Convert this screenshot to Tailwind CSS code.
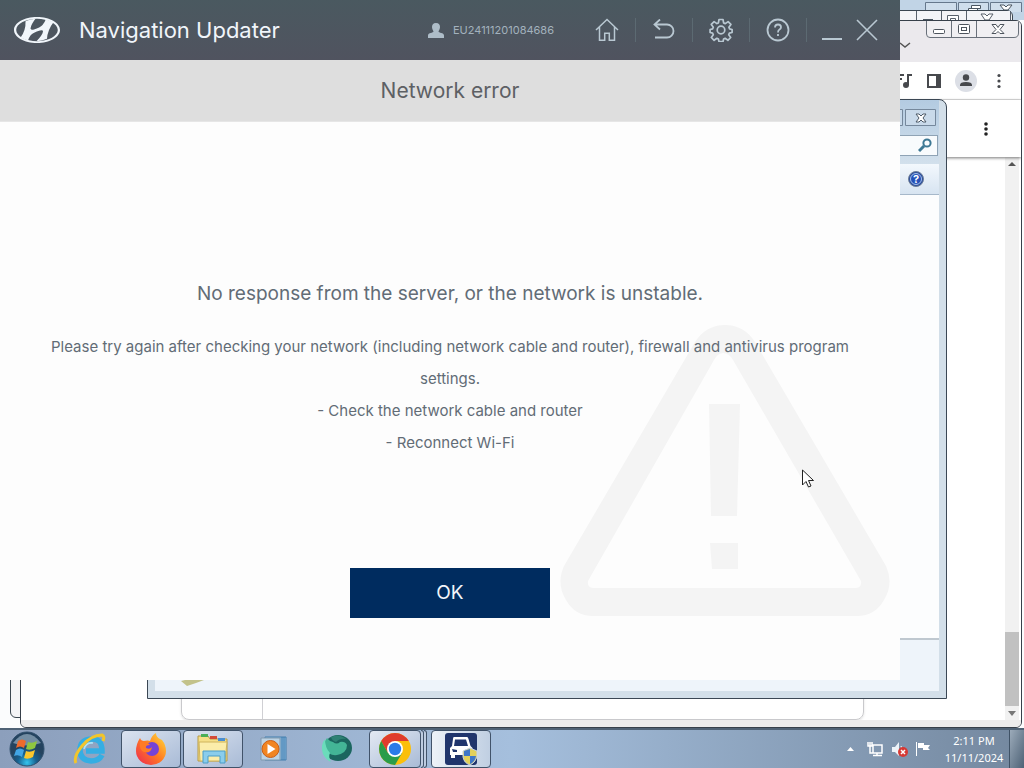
<!DOCTYPE html>
<html lang="en">
<head>
<meta charset="utf-8">
<title>Navigation Updater</title>
<script src="https://cdn.jsdelivr.net/npm/@tailwindcss/browser@4"></script>
</head>
<body class="flex h-screen flex-col overflow-hidden bg-[#b9cde0] font-['Inter','Liberation_Sans',sans-serif]">

<!-- Desktop with its stacked windows -->
<div class="relative min-h-0 flex-1 overflow-hidden">

  <!-- Rearmost window -->
  <div class="absolute inset-0 bg-[#fbfcfd]">
    <div class="h-5 bg-[#c1d4e6]"></div>
    <svg class="absolute top-0 right-0" width="104" height="12" viewBox="0 0 104 12" fill="#cfdeec" stroke="#66788c">
      <path d="M5.500 2.500H36.500V14H5.500zM38.500 2.500H68.500V14H38.500zM70.500 2.500H101.500V14H70.500z"/>
      <path d="M51.500 5.500h9v3h-9zM48.500 8.500h9v4h-9z" fill="#fff" stroke="#4b5661"/>
      <path d="M80 5h4l2 2 2-2h4l-4 5h-4z" fill="#fff" stroke="#4b5661"/>
    </svg>
  </div>

  <!-- Second window -->
  <div class="absolute top-[10px] right-[11px] bottom-[10px] left-[10px] rounded-md border border-[#3b4650] bg-[#f4f4f6]">
    <svg class="absolute top-0 right-0" width="100" height="12" viewBox="0 0 100 12" fill="#f3f4f7" stroke="#59616b">
      <path d="M4.500 -1V14H29.500V-1M54.500 -1V14H98.500V-1"/>
      <path d="M11 8.500h10" stroke="#4b5661"/>
      <path d="M35.500 4.500h11v8h-11zM38.500 7.500h5v3h-5z" fill="#fff"/>
      <path d="M69 3h4l2 2 2-2h4l-4 6h-4z" fill="#fff"/>
    </svg>
  </div>

  <!-- Browser window -->
  <section class="absolute top-[20px] right-[2px] bottom-0 left-[20px] isolate flex flex-col overflow-hidden rounded-md border border-[#37404a] bg-[#ebebed]">
    <div class="flex h-[41px] shrink-0 items-start justify-end bg-[#ebe9ed] pr-[2px]">
      <svg class="mt-[20px] mr-[15px]" width="12" height="9" fill="none" stroke="#555" stroke-width="1.500"><path d="M1 2l5 4 5-4"/></svg>
      <svg width="93" height="18" viewBox="0 0 93 18" fill="#f0eff2" stroke="#69707a">
        <path d="M.5 0V13Q.5 16.500 4 16.500H88Q92.500 16.500 92.500 12V0M25.500 0V16.500M50.500 0V16.500"/>
        <rect x="7.500" y="8.500" width="11" height="4" rx="1" fill="#fff" stroke="#4d545d"/>
        <rect x="32.500" y="3.500" width="11" height="9" rx="1" fill="#fff" stroke="#4d545d"/>
        <rect x="35.500" y="6.500" width="5" height="3" fill="#fff" stroke="#4d545d"/>
        <path d="M66 3.500h4l2 3 2-3h4l-4 5 4 4h-4l-2-2-2 2h-4l4-4z" fill="#fff" stroke="#4d545d"/>
      </svg>
    </div>
    <div class="flex h-[38px] shrink-0 items-center justify-end gap-[13px] border-b border-[#dcdcdc] bg-white pr-[17px] text-[#47494d]">
      <svg width="20" height="20" fill="none" stroke="currentColor" stroke-width="2"><path d="M2 4h9M2 8h7M15 14V4h4"/><circle cx="13" cy="14" r="2" fill="currentColor"/></svg>
      <svg width="16" height="16" fill="none" stroke="currentColor" stroke-width="2"><path d="M2 2h12v12H2z"/><path d="M10 1h5v14h-5z" fill="currentColor" stroke="none"/></svg>
      <svg class="mr-1" width="22" height="22" viewBox="0 0 22 22"><circle cx="11" cy="11" r="11" fill="#dcdfe6"/><circle cx="11" cy="7.500" r="3.200" fill="currentColor"/><path d="M5 16v-1q0-3 6-3t6 3v1z" fill="currentColor"/></svg>
      <svg width="10" height="16" fill="currentColor"><circle cx="5" cy="2.500" r="1.600"/><circle cx="5" cy="8" r="1.600"/><circle cx="5" cy="13.500" r="1.600"/></svg>
    </div>
    <div class="z-10 flex h-[57px] shrink-0 items-center justify-end bg-white pr-[31px] shadow-[0_1px_3px_#777]">
      <svg width="8" height="16" fill="#222"><circle cx="4" cy="3" r="1.800"/><circle cx="4" cy="8" r="1.800"/><circle cx="4" cy="13" r="1.800"/></svg>
    </div>
    <div class="flex min-h-0 flex-1 bg-white">
      <div class="flex flex-1 items-end">
        <div class="mr-[141px] ml-[160px] h-24 flex-1 rounded-lg border border-[#c9c9cc] pl-[80px] shadow-sm"><div class="h-full border-l border-[#d0d0d4]"></div></div>
      </div>
      <div class="mr-[2px] flex w-[14px] flex-col items-center justify-between bg-[#f1f1f1] py-1">
        <svg width="8" height="6" fill="#555"><path d="M0 5l4-4 4 4z"/></svg>
        <div class="mt-auto mb-[5px] h-[74px] w-full bg-[#c1c1c1]"></div>
        <svg width="8" height="5" fill="#777"><path d="M0 0h8L4 5z"/></svg>
      </div>
    </div>
    <div class="h-[7px] shrink-0 bg-[#ececec]"></div>
  </section>

  <!-- File explorer window -->
  <section class="absolute top-[99px] right-[77px] bottom-[29px] left-[147px] flex flex-col rounded-tr-lg border border-[#3b4754] bg-[#d3dfe9] px-[7px] pb-[7px]">
    <div class="flex h-[64px] shrink-0 flex-col items-end bg-linear-to-b from-[#b3cbe1] to-[#d2e0ec]">
      <svg class="mt-[9px] shrink-0" width="70" height="17" viewBox="0 0 70 17" fill="#c9daea" stroke="#75889c">
        <path d="M.5.5h33v16H.5zM36.500.5h30v16h-30z"/>
        <path d="M47 5h3l2 2 2-2h3l-3 4 3 4h-3l-2-2-2 2h-3l3-4z" fill="#fff" stroke="#4d5a68"/>
      </svg>
      <div class="mt-[9px] mr-px flex h-[21px] w-48 items-center justify-end border border-[#8fa3b5] bg-[#f8fbfd] pr-1">
        <svg width="15" height="15" fill="none" stroke="#3d7894" stroke-width="2"><circle cx="9" cy="5" r="3.600"/><path d="M6 8l-5 5" stroke-width="3"/></svg>
      </div>
    </div>
    <div class="flex h-[31px] shrink-0 items-center justify-end border-b border-[#a6b8ca] bg-linear-to-b from-[#f3f8fd] to-[#d7e4f1] pr-[15px]">
      <svg width="16" height="16" viewBox="0 0 16 16"><circle cx="8" cy="8" r="7.500" fill="#2c4f9e" stroke="#6f7f98"/><circle cx="8" cy="8" r="5.500" fill="#2450b8" stroke="#a5c0e8"/><text x="8" y="12" font-size="11" font-weight="700" fill="#fff" text-anchor="middle">?</text></svg>
    </div>
    <div class="min-h-0 flex-1 border-b-2 border-[#bfc8d0] bg-[#fcfdfe]"></div>
    <div class="flex h-[51px] shrink-0 items-end bg-[#eef4fa] pb-[5px] pl-[24px]">
      <svg width="28" height="8"><path d="M2 3l12-3 11 2-8 3-9 3z" fill="#c2c28a"/></svg>
    </div>
  </section>

  <!-- Navigation Updater window -->
  <main class="absolute top-0 right-[124px] bottom-[48px] left-0 flex flex-col bg-[#fdfdfd] text-[#626c76]">
    <header class="flex h-[60px] shrink-0 items-center bg-linear-to-b from-[#4a5960] to-[#50535f] pr-[16px] pl-[14px]">
      <svg width="46" height="26" viewBox="0 0 46 26" fill="#f1f6fb">
        <path fill-rule="evenodd" d="M23 0C35.700 0 46 5.800 46 13S35.700 26 23 26 0 20.200 0 13 10.300 0 23 0zM23 1.800C12 1.800 2.200 6.800 2.200 13S12 24.200 23 24.200 43.800 19.200 43.800 13 34 1.800 23 1.800z"/>
        <path d="M11.500 4.200Q16 2.200 21.500 1.800Q17 7.500 16.500 11.500Q17 13.500 20 12.500Q26 10.500 28.500 8Q31 5 31.800 2.300L39.500 5.200Q33.500 13 33 21.800Q28 24 22.500 24.300Q28.500 18 29 14.500Q29 12.500 26 13.500Q19 15.500 16.500 18.500Q15 20.500 14 23.500L6.500 20.800Q12 13 11.500 4.200z"/>
      </svg>
      <h1 class="ml-[19px] text-[22px] text-[#f1f5fa]">Navigation Updater</h1>
      <div class="ml-auto flex items-center text-[#b9c8d2]">
        <svg class="mr-[9px]" width="16" height="15" viewBox="0 0 16 15" fill="#aebdc8"><path d="M8 0c3 0 4 2 4 4s-1 3-1.500 4.500c0 1.500 5.500 1 5.500 4V15H0v-2.500c0-3 5.500-2.500 5.500-4C5 7 4 6 4 4s1-4 4-4z"/></svg>
        <span class="mr-[25px] text-[11px] text-[#a3b2bd]">EU24111201084686</span>
        <button aria-label="Home" class="flex h-6 w-[57px] items-center justify-center border-r border-[#5c6a72]">
          <svg width="24" height="24" fill="none" stroke="currentColor" stroke-width="1.500"><path d="M1 12L12 1.500 23 12M4.500 9v13.200h5.200v-7h4.600v7h5.200V9"/></svg>
        </button>
        <button aria-label="Back" class="flex h-6 w-[57px] items-center justify-center border-r border-[#5c6a72]">
          <svg width="22" height="22" fill="none" stroke="currentColor" stroke-width="1.800"><path d="M7 .5L1.500 5.500 7 10.500M2 5.500h12a6.500 6.500 0 0 1 0 13H2"/></svg>
        </button>
        <button aria-label="Settings" class="flex h-6 w-[57px] items-center justify-center border-r border-[#5c6a72]">
          <svg width="24" height="24" viewBox="0 0 24 24" fill="none" stroke="currentColor" stroke-width="1.700" stroke-linejoin="round"><path d="M10 1.500h4l.6 3.400 1.700.7 2.800-2 2.800 2.800-2 2.800.7 1.700 2.500.6v3l-2.700.6-.7 1.700 2 2.700-2.800 2.800-2.800-2-1.500.7-.6 2.700h-4l-.6-2.700-1.500-.7-2.800 2-2.800-2.800 2-2.700-.7-1.700-2.500-.6v-3l2.500-.6.7-1.700-2-2.800 2.800-2.800 2.800 2 1.500-.7z"/><circle cx="12" cy="12" r="3.800"/></svg>
        </button>
        <button aria-label="Help" class="flex h-6 w-[57px] items-center justify-center border-r border-[#5c6a72]">
          <svg width="24" height="24" fill="none" stroke="currentColor" stroke-width="1.800"><circle cx="12" cy="12" r="10.500"/><path d="M9 9.500q0-3 3-3t3 2.700q0 1.500-1.500 2.300T12 14.500M12 16v2"/></svg>
        </button>
        <button aria-label="Minimize" class="ml-[7px] flex h-6 w-[35px] items-center justify-center"><svg width="20" height="22" stroke="currentColor" stroke-width="2"><path d="M0 20h20"/></svg></button>
        <button aria-label="Close" class="flex h-6 w-[35px] items-center justify-center"><svg width="22" height="22" stroke="currentColor" stroke-width="1.600"><path d="M1 1l20 20M21 1L1 21"/></svg></button>
      </div>
    </header>
    <h2 class="flex h-[62px] shrink-0 items-center justify-center border-b border-[#e6e6e6] bg-[#dedede] text-[21px] text-[#5d6064]">Network error</h2>
    <div class="relative flex min-h-0 flex-1 flex-col items-center px-8 pt-[156px] text-center">
      <svg class="absolute right-[10px] bottom-[63px]" width="330" height="292" viewBox="0 0 330 292" fill="#f4f4f4">
        <path fill-rule="evenodd" d="M165 0Q184 0 195 17L326 241Q334 259 324 275Q315 291 297 291H33Q15 291 6 275Q-4 259 4 241L135 17Q146 0 165 0zM163 28Q158 28 154 35L28 256Q27 263 34 263H295Q302 263 301 256L173 35Q169 28 163 28z"/>
        <path d="M149 79h31l-3 112h-26zM150 218h28v26h-26z"/>
      </svg>
      <p class="relative text-[19px] leading-8">No response from the server, or the network is unstable.</p>
      <p class="relative mt-[21px] text-[15px] leading-8">Please try again after checking your network (including network cable and router), firewall and antivirus program settings.<br>- Check the network cable and router<br>- Reconnect Wi-Fi</p>
      <button class="relative mt-auto mb-[62px] h-[50px] w-[200px] shrink-0 bg-[#002c5f] text-[19px] text-[#f1f5fa]">OK</button>
    </div>
  </main>

  <!-- Mouse pointer -->
  <svg class="absolute top-[469px] left-[802px]" width="13" height="20" fill="#fff" stroke="#222"><path d="M.5 1v15l3.500-3.500 2.500 5.500 2.500-1-2.500-5.500h5z"/></svg>
</div>

<!-- Taskbar -->
<footer class="flex h-[40px] shrink-0 items-center border-t-2 border-[#4f6275] bg-linear-to-r from-[#8c9fbc] via-[#a5bfdd] via-50% to-[#74889f]">
  <button aria-label="Start" class="ml-[9px] w-[36px]">
    <svg width="36" height="36" viewBox="0 0 36 36"><defs><radialGradient id="orb" cy=".9"><stop offset="0" stop-color="#35c5ee"/><stop offset=".55" stop-color="#17608f"/><stop offset="1" stop-color="#24435f"/></radialGradient></defs><circle cx="18" cy="18" r="17" fill="url(#orb)" stroke="#31506d"/><path d="M4 12Q18-6 32 12Q18 17 4 12z" fill="#a9bfd1" opacity=".6"/><path d="M9 10q4-3 8 0l-2 7q-4-3-8 0z" fill="#ee6b2c"/><path d="M19 11q4 2 9-1l-2 7q-5 3-9 1z" fill="#8fc640"/><path d="M7 19q4-3 8 0l-2 7q-4-3-8-1z" fill="#42a5e5"/><path d="M17 20q4 2 9-1l-2 7q-5 3-9 1z" fill="#fbc62c"/></svg>
  </button>
  <button aria-label="Internet Explorer" class="ml-[28px] w-[34px]">
    <svg width="34" height="34" viewBox="0 0 34 34" fill="none"><path d="M29 23Q26 29 18 29Q7 28 7 18T18 7T29 19H13" stroke="#35aee3" stroke-width="5.500"/><path d="M11 17Q13 10 20 11" stroke="#a9e6fa" stroke-width="1.500"/><path d="M3 31Q0 25 9 14T29 3Q32 4 30 9" stroke="#f2c52b" stroke-width="3"/></svg>
  </button>
  <button aria-label="Firefox" class="ml-[14px] flex h-[38px] w-[60px] items-center justify-center rounded-sm border border-[#41536a] bg-linear-to-br from-[#dbe3f0] to-[#a9bbd6]">
    <svg width="32" height="32" viewBox="0 0 32 32"><defs><linearGradient id="fox" x1="1" y1="0" x2="0" y2="1"><stop offset="0" stop-color="#ffe23c"/><stop offset=".5" stop-color="#ff7a22"/><stop offset="1" stop-color="#ec2455"/></linearGradient></defs><path d="M5 5q1 3 4 3 4-1 6 0 2-6 6-8 0 4 4 6l2 1q4 5 4 11a15 14 0 0 1-30 0q0-7 4-13z" fill="url(#fox)"/><circle cx="17" cy="16" r="7" fill="#7543d5"/><path d="M5 9q6-2 10 3-5 0-4 3 4 2 6-1-1 7-8 5-5-2-4-10z" fill="#ff7b26"/></svg>
  </button>
  <button aria-label="File explorer" class="ml-[2px] flex h-[38px] w-[60px] items-center justify-center rounded-sm border border-[#41536a] bg-linear-to-br from-[#dbe3f0] to-[#a9bbd6]">
    <svg width="34" height="32" viewBox="0 0 34 32"><path d="M2 3h10l2 3h17v22H2z" fill="#f5df87" stroke="#b89b45"/><path d="M5 1h7v3H5z" fill="#4aae58"/><path d="M14 3h7v3h-7z" fill="#d34a38"/><path d="M22 5h7v3h-7z" fill="#4b8ed0"/><path d="M3 9h28l-2 19H4z" fill="#fbedaa" stroke="#cfb45d"/><path d="M7 18h22v12h-5v-7H12v7H7z" fill="#8acdec" stroke="#4a9dc8"/></svg>
  </button>
  <button aria-label="Media player" class="ml-[17px] w-[26px]">
    <svg width="28" height="26" viewBox="0 0 28 26"><path d="M5 1h21v23H5z" fill="#87b9df" stroke="#437eae"/><path d="M22 1v23M24 1v23" stroke="#3f79a9"/><path d="M1 2h19v22H1z" fill="#bcd3e4" stroke="#8299ad"/><circle cx="10.500" cy="13" r="8.500" fill="#f18521" stroke="#c95f17"/><path d="M7.500 8v10l8-5z" fill="#fff"/></svg>
  </button>
  <button aria-label="Browser" class="ml-[34px] w-[34px]">
    <svg width="34" height="30" viewBox="0 0 34 30"><ellipse cx="18" cy="14" rx="14" ry="13" fill="#1b665f"/><path d="M7 4Q3 9 5 15Q9 22 17 21Q27 19 27 11Q25 7 20 8Q17 11 13 8Q9 7 7 4z" fill="#43b596"/><path d="M5 5Q0 11 3 20Q6 26 11 28Q8 23 10 19Q5 14 5 5z" fill="#6bdcbb"/><path d="M11 3Q19-1 26 5Q20 4 16 8Q12 7 11 3z" fill="#2e8174"/></svg>
  </button>
  <button aria-label="Chrome" class="ml-[15px] flex h-[38px] w-[52px] items-center justify-center rounded-sm border border-[#41536a] bg-linear-to-br from-[#e3e9f3] to-[#a9bbd6]">
    <svg width="32" height="32" viewBox="0 0 32 32"><circle cx="16" cy="16" r="16" fill="#fbbf0b"/><path d="M2.200 8A16 16 0 0 1 29.800 8H16L9 20z" fill="#df3b2d"/><path d="M2.200 8A16 16 0 0 0 16 32L23 20H9z" fill="#2a9c4a"/><circle cx="16" cy="16" r="8" fill="#fff"/><circle cx="16" cy="16" r="6.200" fill="#2b7be8"/></svg>
  </button>
  <div class="h-[38px] w-[3px] rounded-r-sm border border-l-0 border-[#41536a] bg-[#bdcce1]"></div>
  <div class="h-[38px] w-[3px] rounded-r-sm border border-l-0 border-[#41536a] bg-[#bdcce1]"></div>
  <button aria-label="Navigation Updater" class="ml-[4px] flex h-[38px] w-[60px] items-center justify-center rounded-sm border border-[#41536a] bg-linear-to-r from-[#edf2f8] to-[#c0cfe2]">
    <svg width="32" height="32" viewBox="0 0 32 32"><rect width="32" height="32" rx="3" fill="#20356c"/><path fill-rule="evenodd" d="M9 4h13q1 0 1.500 2l2 7 2 2v7h-4v3h-3v-3H10v3H6v-3H5v-7l2-2 1-7q0-2 1-2zM10 6.500L9 13h14l-2-6.500z" fill="#fff"/><path d="M7 16l5 1v2H8zM25 16l-5 1v2h4z" fill="#20356c"/><path d="M25 15l7 3v6q-2 6-7 8-6-2-7-8v-6z" fill="#e2d05a" stroke="#c4d2e2"/><path d="M25 16v7h-6v-5zM25 23h6q-1 6-6 8z" fill="#3e76c8"/></svg>
  </button>
  <div class="ml-auto flex h-full items-center text-white">
    <svg width="7" height="4" fill="#fff"><path d="M0 4l3.500-4L7 4z"/></svg>
    <svg class="ml-[13px]" width="17" height="16" fill="none" stroke="#fff" stroke-width="1.500"><path d="M6 4h9v8H6zM10 12v2M6 14.500h9M1 1v4h4V1M3 1v4v7h3"/></svg>
    <svg class="ml-[7px]" width="18" height="17"><path d="M1 6h3l4-5v14l-4-4H1z" fill="#edf3f8"/><path d="M10 5q2 3 0 6" stroke="#fff" fill="none"/><circle cx="12" cy="11" r="5" fill="#d63a35"/><path d="M10 9l4 4M14 9l-4 4" stroke="#fff" stroke-width="1.500"/></svg>
    <svg class="ml-[6px]" width="16" height="16" fill="#fff"><path d="M1 1h1v14H1zM3 2h6v2h6l-2 3 2 2H8V7H3z"/></svg>
    <div class="ml-[12px] w-[62px] text-center font-['Noto_Sans',sans-serif] text-[11px] leading-[17px] whitespace-nowrap">2:11 PM<br>11/11/2024</div>
    <button aria-label="Show desktop" class="ml-[4px] h-full w-[15px] border-l border-[#3f5266] bg-linear-to-br from-[#9cabba] to-[#4e6276]"></button>
  </div>
</footer>
</body>
</html>
